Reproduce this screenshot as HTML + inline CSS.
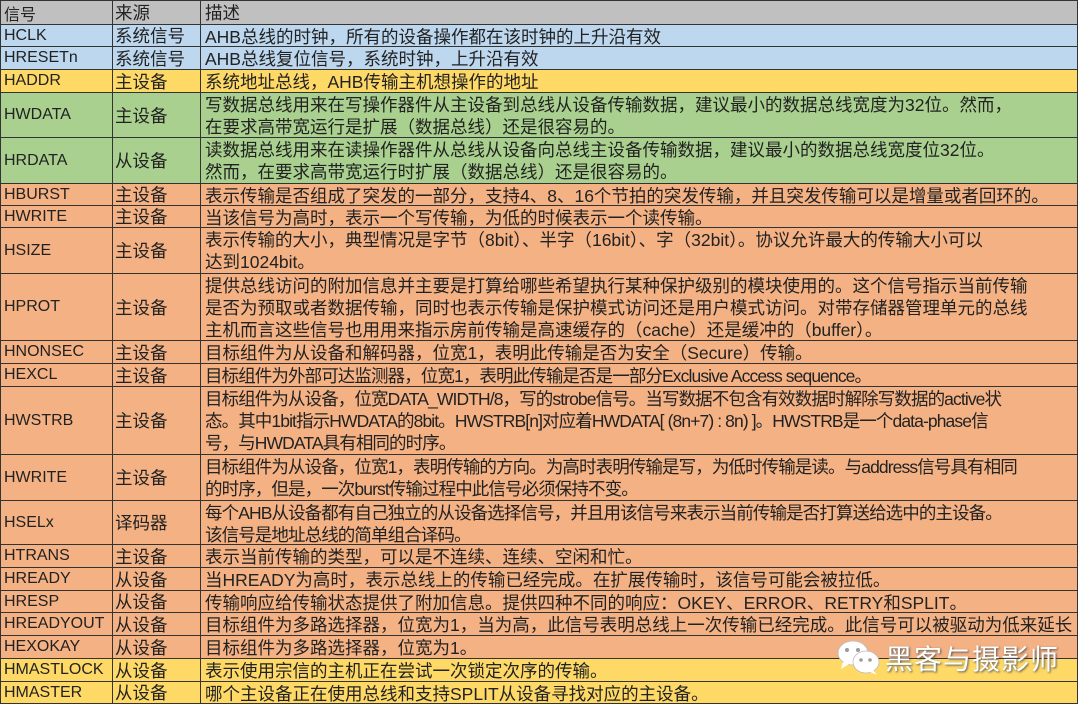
<!DOCTYPE html>
<html><head><meta charset="utf-8"><style>
*{margin:0;padding:0;box-sizing:border-box}
body{width:1080px;height:705px;overflow:hidden;background:#fff;font-family:"Liberation Sans","Noto Sans CJK SC",sans-serif;font-size:17.5px;color:#222;position:relative}
.r{position:absolute;left:0;width:1078px;border:1px solid #333}
.c{position:absolute;top:0;bottom:0;overflow:hidden;white-space:nowrap}
.a{left:0;width:112px;padding-left:3px;display:flex;align-items:center;border-right:1px solid #333;font-size:16px}
.b{left:112px;width:88px;padding-left:2px;display:flex;align-items:center;border-right:1px solid #333}
.d{left:200px;right:0;padding-left:4px;line-height:22px;padding-top:1px}
.g{background:#c0c0c0}.bl{background:#bdd7ee}.y{background:#ffd966}.gr{background:#a9d08e}.o{background:#f4b183}
.n{letter-spacing:-0.9px}
.wm{position:absolute;left:885px;top:638px;font-size:28px;color:#fff;text-shadow:1px 1px 2px #555;font-family:"Noto Sans CJK SC",sans-serif;letter-spacing:1px}
</style></head><body>
<div class="r g" style="top:0;height:25px"><div class="c a">信号</div><div class="c b">来源</div><div class="c d">描述</div></div>
<div class="r bl" style="top:24px;height:23px"><div class="c a">HCLK</div><div class="c b">系统信号</div><div class="c d">AHB总线的时钟，所有的设备操作都在该时钟的上升沿有效</div></div>
<div class="r bl" style="top:46px;height:24px"><div class="c a">HRESETn</div><div class="c b">系统信号</div><div class="c d">AHB总线复位信号，系统时钟，上升沿有效</div></div>
<div class="r y" style="top:69px;height:24px"><div class="c a">HADDR</div><div class="c b">主设备</div><div class="c d">系统地址总线，AHB传输主机想操作的地址</div></div>
<div class="r gr" style="top:92px;height:46px"><div class="c a">HWDATA</div><div class="c b">主设备</div><div class="c d">写数据总线用来在写操作器件从主设备到总线从设备传输数据，建议最小的数据总线宽度为32位。然而，<br>在要求高带宽运行是扩展（数据总线）还是很容易的。</div></div>
<div class="r gr" style="top:137px;height:47px"><div class="c a">HRDATA</div><div class="c b">从设备</div><div class="c d">读数据总线用来在读操作器件从总线从设备向总线主设备传输数据，建议最小的数据总线宽度位32位。<br>然而，在要求高带宽运行时扩展（数据总线）还是很容易的。</div></div>
<div class="r o" style="top:183px;height:23px"><div class="c a">HBURST</div><div class="c b">主设备</div><div class="c d">表示传输是否组成了突发的一部分，支持4、8、16个节拍的突发传输，并且突发传输可以是增量或者回环的。</div></div>
<div class="r o" style="top:205px;height:23px"><div class="c a">HWRITE</div><div class="c b">主设备</div><div class="c d">当该信号为高时，表示一个写传输，为低的时候表示一个读传输。</div></div>
<div class="r o" style="top:227px;height:47px"><div class="c a">HSIZE</div><div class="c b">主设备</div><div class="c d">表示传输的大小，典型情况是字节（8bit）、半字（16bit）、字（32bit）。协议允许最大的传输大小可以<br>达到1024bit。</div></div>
<div class="r o" style="top:273px;height:68px"><div class="c a">HPROT</div><div class="c b">主设备</div><div class="c d">提供总线访问的附加信息并主要是打算给哪些希望执行某种保护级别的模块使用的。这个信号指示当前传输<br>是否为预取或者数据传输，同时也表示传输是保护模式访问还是用户模式访问。对带存储器管理单元的总线<br>主机而言这些信号也用用来指示房前传输是高速缓存的（cache）还是缓冲的（buffer）。</div></div>
<div class="r o" style="top:340px;height:24px"><div class="c a">HNONSEC</div><div class="c b">主设备</div><div class="c d">目标组件为从设备和解码器，位宽1，表明此传输是否为安全（Secure）传输。</div></div>
<div class="r o" style="top:363px;height:24px"><div class="c a">HEXCL</div><div class="c b">主设备</div><div class="c d n">目标组件为外部可达监测器，位宽1，表明此传输是否是一部分Exclusive Access sequence。</div></div>
<div class="r o" style="top:386px;height:69px"><div class="c a">HWSTRB</div><div class="c b">主设备</div><div class="c d n">目标组件为从设备，位宽DATA_WIDTH/8，写的strobe信号。当写数据不包含有效数据时解除写数据的active状<br>态。其中1bit指示HWDATA的8bit。HWSTRB[n]对应着HWDATA[ (8n+7) : 8n) ]。HWSTRB是一个data-phase信<br>号，与HWDATA具有相同的时序。</div></div>
<div class="r o" style="top:454px;height:47px"><div class="c a">HWRITE</div><div class="c b">主设备</div><div class="c d n">目标组件为从设备，位宽1，表明传输的方向。为高时表明传输是写，为低时传输是读。与address信号具有相同<br>的时序，但是，一次burst传输过程中此信号必须保持不变。</div></div>
<div class="r o" style="top:500px;height:45px"><div class="c a">HSELx</div><div class="c b">译码器</div><div class="c d n">每个AHB从设备都有自己独立的从设备选择信号，并且用该信号来表示当前传输是否打算送给选中的主设备。<br>该信号是地址总线的简单组合译码。</div></div>
<div class="r o" style="top:544px;height:24px"><div class="c a">HTRANS</div><div class="c b">主设备</div><div class="c d">表示当前传输的类型，可以是不连续、连续、空闲和忙。</div></div>
<div class="r o" style="top:567px;height:24px"><div class="c a">HREADY</div><div class="c b">从设备</div><div class="c d">当HREADY为高时，表示总线上的传输已经完成。在扩展传输时，该信号可能会被拉低。</div></div>
<div class="r o" style="top:590px;height:23px"><div class="c a">HRESP</div><div class="c b">从设备</div><div class="c d">传输响应给传输状态提供了附加信息。提供四种不同的响应：OKEY、ERROR、RETRY和SPLIT。</div></div>
<div class="r o" style="top:612px;height:24px"><div class="c a">HREADYOUT</div><div class="c b">从设备</div><div class="c d">目标组件为多路选择器，位宽为1，当为高，此信号表明总线上一次传输已经完成。此信号可以被驱动为低来延长</div></div>
<div class="r o" style="top:635px;height:24px"><div class="c a">HEXOKAY</div><div class="c b">从设备</div><div class="c d">目标组件为多路选择器，位宽为1。</div></div>
<div class="r y" style="top:658px;height:24px"><div class="c a">HMASTLOCK</div><div class="c b">从设备</div><div class="c d">表示使用宗信的主机正在尝试一次锁定次序的传输。</div></div>
<div class="r y" style="top:681px;height:23px"><div class="c a">HMASTER</div><div class="c b">从设备</div><div class="c d">哪个主设备正在使用总线和支持SPLIT从设备寻找对应的主设备。</div></div>
<svg style="position:absolute;left:836px;top:640px" width="46" height="36" viewBox="0 0 46 36">
<ellipse cx="17" cy="13" rx="15" ry="12" fill="#fff" stroke="#bbb" stroke-width="0.8"/>
<path d="M7 22 L5 29 L13 24 Z" fill="#fff"/>
<circle cx="11" cy="10" r="2" fill="#999"/><circle cx="22" cy="10" r="2" fill="#999"/>
<ellipse cx="30" cy="22" rx="13" ry="11" fill="#fff" stroke="#bbb" stroke-width="0.8"/>
<path d="M37 30 L41 35 L34 32 Z" fill="#fff"/>
<circle cx="25" cy="20" r="1.8" fill="#999"/><circle cx="34" cy="20" r="1.8" fill="#999"/>
</svg>
<div class="wm">黑客与摄影师</div>
</body></html>
